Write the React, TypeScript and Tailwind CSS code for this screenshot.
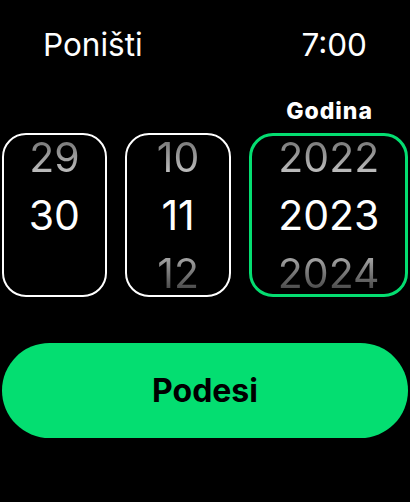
import React from "react";

const font = { fontFamily: "Inter, 'Noto Sans', sans-serif" };

function Row({ v, kind }: { v: string; kind: "top" | "mid" | "bot" }) {
  const cls =
    kind === "mid"
      ? "text-white"
      : kind === "top"
      ? "bg-gradient-to-b from-[#606060] to-[#dcdcdc] bg-clip-text text-transparent"
      : "bg-gradient-to-b from-[#d0d0d0] to-[#2a2a2a] bg-clip-text text-transparent";
  return (
    <div className={`h-[58px] shrink-0 flex items-center justify-center text-[41px] leading-[58px] ${cls}`}>
      {v}
    </div>
  );
}

function Picker({ items, w, active }: { items: [string, string, string]; w: string; active?: boolean }) {
  return (
    <div
      className={`${w} h-[164px] rounded-[24px] overflow-hidden flex flex-col items-center justify-center ${
        active ? "border-[3px] border-[#04de71]" : "border-2 border-white"
      }`}
    >
      <Row v={items[0]} kind="top" />
      <Row v={items[1]} kind="mid" />
      <Row v={items[2]} kind="bot" />
    </div>
  );
}

export default function App() {
  return (
    <div className="w-[410px] h-[502px] bg-black text-white overflow-hidden" style={font}>
      <div className="flex justify-between items-center pl-[43px] pr-[43px] pt-[24px] h-[66px]">
        <span className="text-[31.5px] leading-none">Poništi</span>
        <span className="text-[31.5px] leading-none">7:00</span>
      </div>
      <div className="flex justify-end pr-[37px] pt-[34px]">
        <span className="text-[23px] font-extrabold leading-none tracking-[1px]">Godina</span>
      </div>
      <div className="flex px-[2px] mt-[10px] gap-[18px]">
        <Picker items={["29", "30", ""]} w="w-[105px]" />
        <Picker items={["10", "11", "12"]} w="w-[107px]" />
        <Picker items={["2022", "2023", "2024"]} w="w-[159px]" active />
      </div>
      <div className="px-[2px] mt-[46px]">
        <div className="h-[95px] rounded-full bg-[#04de71] flex items-center justify-center">
          <span className="text-black text-[32px] font-bold">Podesi</span>
        </div>
      </div>
    </div>
  );
}
